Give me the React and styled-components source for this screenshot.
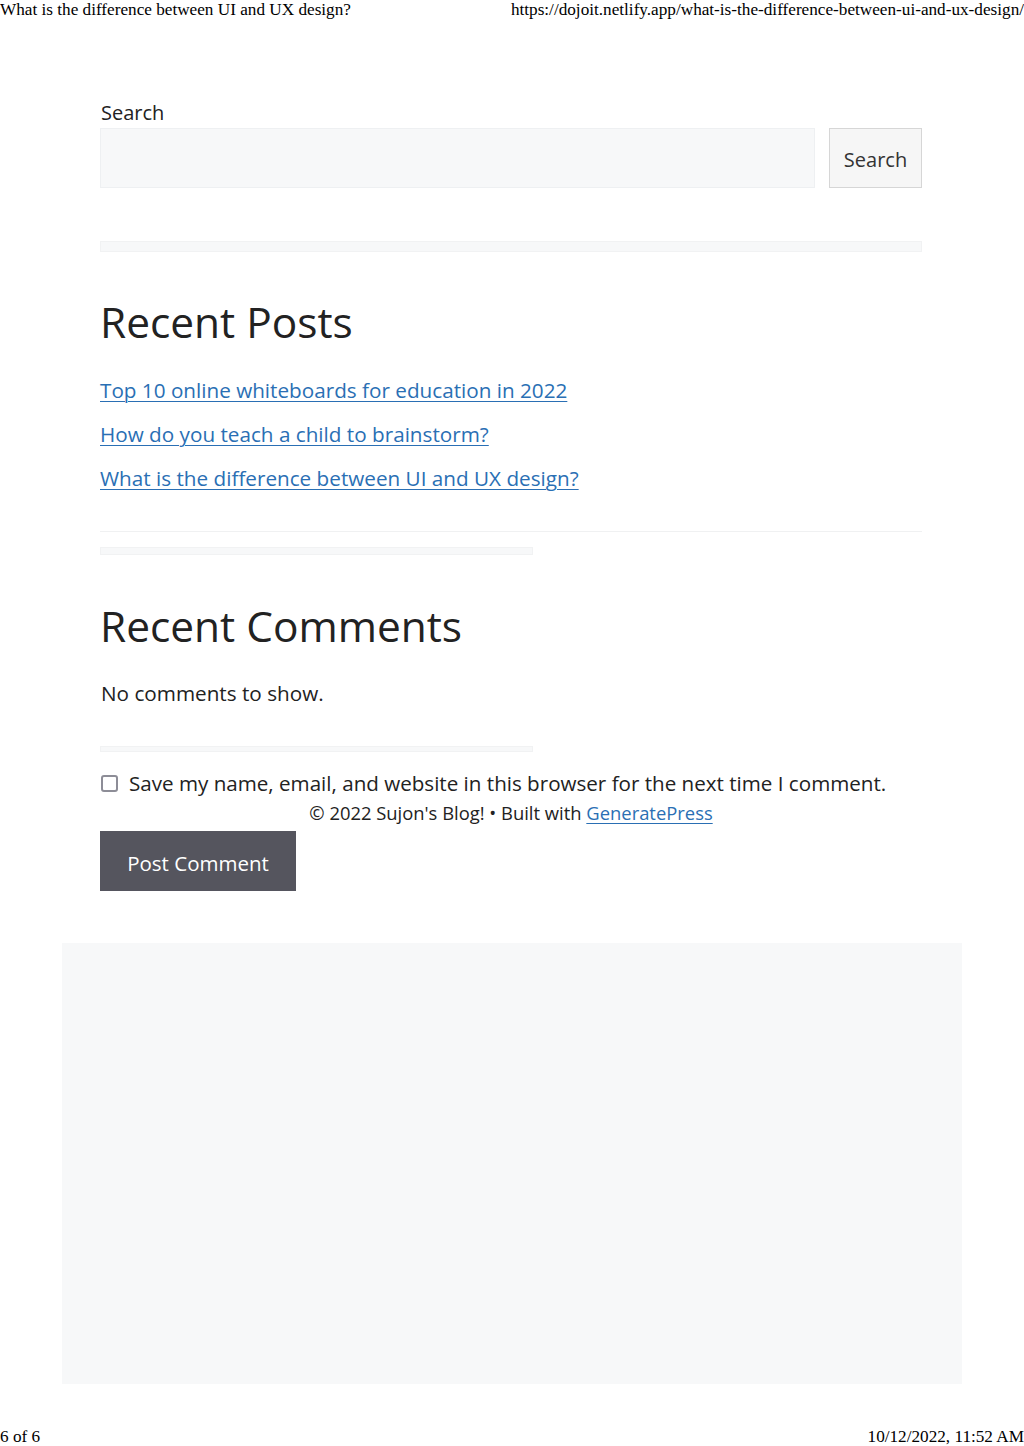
import React from "react";
import styled, { createGlobalStyle } from "styled-components";

const GlobalStyle = createGlobalStyle`
  * { box-sizing: border-box; }
  body {
    margin: 0;
    background: #fff;
    color: #222;
    font-family: "Open Sans", "Noto Sans", sans-serif;
  }
`;

const Page = styled.div`
  display: flex;
  flex-direction: column;
  min-height: 1446px;
`;

const PrintBar = styled.div`
  display: flex;
  justify-content: space-between;
  font-family: "Liberation Serif", serif;
  font-size: 17.2px;
  line-height: ${(p) => p.$lh || 20}px;
  color: #000;
  margin-top: ${(p) => p.$top || "0"};
  white-space: nowrap;
`;

const Content = styled.main`
  width: 822px;
  margin-left: 100px;
`;

const Label = styled.div`
  margin-top: 79px;
  font-size: 20px;
  line-height: 28px;
  margin-bottom: 1px;
  padding-left: 1px;
`;

const SearchRow = styled.form`
  display: flex;
  gap: 14px;
  height: 60px;
`;

const Input = styled.input`
  flex: 1;
  background: #f7f8f9;
  border: 1px solid #eef0f2;
  outline: none;
`;

const GreyButton = styled.button`
  width: 93px;
  background: #f6f6f6;
  border: 1px solid #d6d6d6;
  color: #333;
  font-family: inherit;
  font-size: 20px;
  padding: 3px 0 0;
`;

const Divider = styled.div`
  margin-top: ${(p) => p.$top}px;
  height: ${(p) => p.$h}px;
  width: ${(p) => p.$w || "100%"};
  background: ${(p) => p.$color || "#f7f8f9"};
  border: ${(p) => (p.$h > 2 ? "1px solid #f1f2f3" : "none")};
`;

const Heading = styled.h2`
  margin: ${(p) => p.$top}px 0 0;
  font-size: 42.4px;
  font-weight: 400;
  line-height: 60px;
  color: #222;
`;

const PostList = styled.ul`
  list-style: none;
  margin: 16px 0 0;
  padding: 0;
`;

const PostItem = styled.li`
  font-size: 20.7px;
  line-height: 44px;
  a {
    color: #2a6fb4;
    text-decoration: underline;
    text-underline-offset: 3px;
    text-decoration-thickness: 1px;
  }
`;

const Text = styled.p`
  margin: ${(p) => p.$top}px 0 0;
  font-size: 20.7px;
  line-height: 30px;
  padding-left: 1px;
`;

const CheckRow = styled.label`
  display: flex;
  align-items: center;
  gap: 11px;
  margin-top: 16px;
  font-size: 20.6px;
  line-height: 30px;
  padding-left: 1px;
  white-space: nowrap;
`;

const Check = styled.input`
  appearance: none;
  margin: 0;
  width: 17px;
  height: 17px;
  border: 2px solid #8d8d97;
  border-radius: 3px;
  background: #fff;
`;

const Credit = styled.div`
  margin-top: 3px;
  text-align: center;
  font-size: 18.4px;
  line-height: 24px;
  a {
    color: #2a6fb4;
    text-decoration: underline;
    text-underline-offset: 3px;
  }
`;

const DarkButton = styled.button`
  margin-top: 6px;
  width: 196px;
  height: 60px;
  background: #55555e;
  border: none;
  color: #fff;
  font-family: inherit;
  font-size: 20.5px;
  padding: 3px 0 0;
`;

const Panel = styled.div`
  margin: 52px 0 0 62px;
  width: 900px;
  height: 441px;
  background: #f7f8f9;
`;

const posts = [
  "Top 10 online whiteboards for education in 2022",
  "How do you teach a child to brainstorm?",
  "What is the difference between UI and UX design?",
];

export default function App() {
  return (
    <Page>
      <GlobalStyle />
      <PrintBar>
        <span>What is the difference between UI and UX design?</span>
        <span>https://dojoit.netlify.app/what-is-the-difference-between-ui-and-ux-design/</span>
      </PrintBar>
      <Content>
        <Label>Search</Label>
        <SearchRow onSubmit={(e) => e.preventDefault()}>
          <Input type="search" />
          <GreyButton type="submit">Search</GreyButton>
        </SearchRow>
        <Divider $top={53} $h={11} />
        <Heading $top={40}>Recent Posts</Heading>
        <PostList>
          {posts.map((t) => (
            <PostItem key={t}>
              <a href="#">{t}</a>
            </PostItem>
          ))}
        </PostList>
        <Divider $top={31} $h={1} $color="#f0f1f2" />
        <Divider $top={15} $h={8} $w="433px" />
        <Heading $top={41}>Recent Comments</Heading>
        <Text $top={22}>No comments to show.</Text>
        <Divider $top={38} $h={6} $w="433px" />
        <CheckRow>
          <Check type="checkbox" />
          Save my name, email, and website in this browser for the next time I comment.
        </CheckRow>
        <Credit>
          © 2022 Sujon's Blog! • Built with <a href="#">GeneratePress</a>
        </Credit>
        <DarkButton>Post Comment</DarkButton>
      </Content>
      <Panel />
      <PrintBar $top="auto" $lh={18}>
        <span>6 of 6</span>
        <span>10/12/2022, 11:52 AM</span>
      </PrintBar>
    </Page>
  );
}
